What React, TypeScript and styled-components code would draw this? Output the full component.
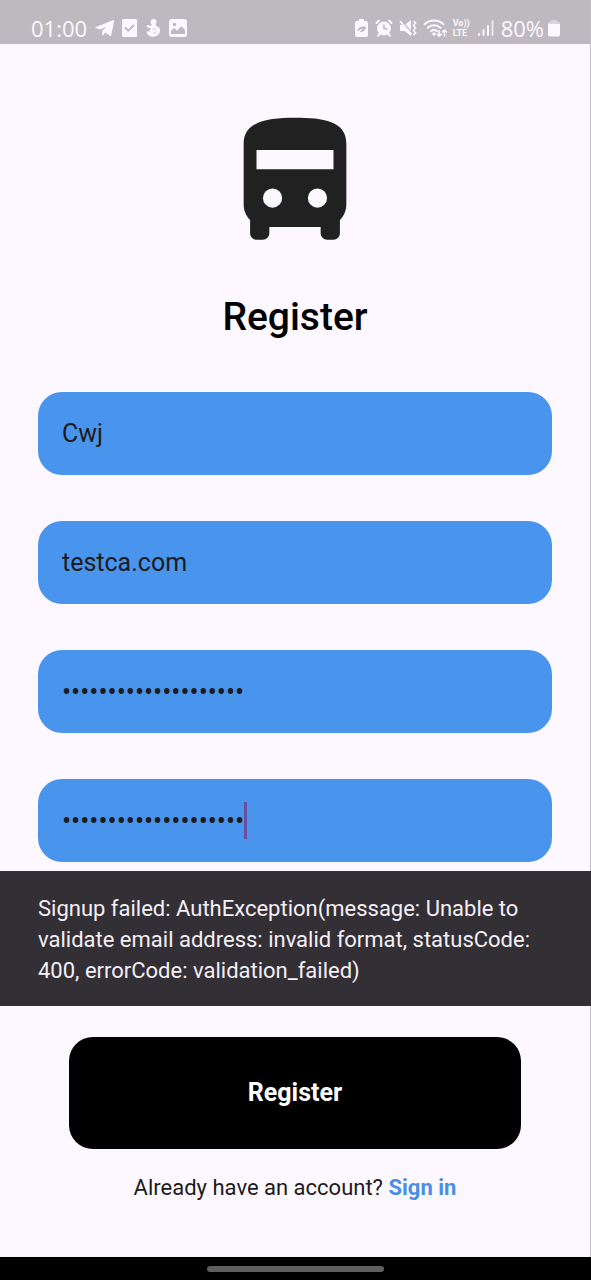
import React, { useState } from "react";
import styled, { createGlobalStyle } from "styled-components";

const GlobalStyle = createGlobalStyle`
  *, *::before, *::after { box-sizing: border-box; }
  body {
    margin: 0;
    background: #fdf8ff;
    color: #1d1b20;
    font-family: Roboto, "Liberation Sans", sans-serif;
  }
`;

const Screen = styled.div`
  display: flex;
  flex-direction: column;
  min-height: 100vh;
  border-right: 1px solid #c4bfc6;
  background: #fdf8ff;
`;

const StatusBar = styled.header`
  display: flex;
  align-items: center;
  justify-content: space-between;
  height: 44px;
  padding: 12px 30px 0 31px;
  background: #beb9bf;
  color: #fdf8ff;
  font: 22px/32px "Open Sans", Roboto, sans-serif;
`;

const StatusGroup = styled.div<{ $gap: number }>`
  display: flex;
  align-items: center;
  gap: ${(p) => p.$gap}px;
`;

const StatusIcon = styled.svg`
  display: block;
  height: 18px;
  flex: none;
  fill: currentColor;
  overflow: visible;
`;

const BatteryLevel = styled.span`
  display: flex;
  align-items: center;
  gap: 4px;
`;

const Volte = styled.span`
  display: flex;
  flex-direction: column;
  gap: 1px;
  width: 18px;
  font: 700 9px/9px Roboto, "Liberation Sans", sans-serif;
`;

const Form = styled.form`
  display: flex;
  flex-direction: column;
  flex: 1;
`;

const BusLogo = styled.svg`
  display: block;
  align-self: center;
  width: 154px;
  height: 154px;
  margin-top: 61px;
  fill: #212121;
`;

const Title = styled.h1`
  margin: 34px 0 51px;
  color: #000;
  font-size: 39px;
  font-weight: 500;
  line-height: 48px;
  text-align: center;
`;

const Fields = styled.div`
  display: flex;
  flex-direction: column;
  gap: 46px;
  padding: 0 38px;
`;

const Field = styled.label`
  display: flex;
  align-items: center;
  height: 83px;
  padding: 0 24px;
  border-radius: 24px;
  background: #4994ec;
  cursor: text;
`;

const FieldInput = styled.input<{ $hugsText?: boolean }>`
  ${(p) => (p.$hugsText ? "field-sizing: content;" : "flex: 1;")}
  min-width: 0;
  height: 36px;
  padding: 0;
  border: 0;
  outline: 0;
  background: transparent;
  color: #1d1b20;
  caret-color: transparent;
  font: ${(p) => (p.type === "password" ? 27 : 25)}px/36px Roboto, "Liberation Sans", sans-serif;
`;

const Caret = styled.span`
  width: 3px;
  height: 37px;
  background: #6750a4;
`;

const Snackbar = styled.div`
  margin: 9px -1px 0 0;
  padding: 22px 38px 20px;
  background: #322f35;
  color: #f5eff7;
  font-size: 22px;
  line-height: 31px;
`;

const SubmitButton = styled.button`
  height: 112px;
  margin: 31px 69px 0;
  border: 0;
  border-radius: 24px;
  background: #000;
  color: #fff;
  font: 700 25px/36px Roboto, "Liberation Sans", sans-serif;
  cursor: pointer;
`;

const SignInPrompt = styled.p`
  margin: 23px 0 0;
  font-size: 22px;
  line-height: 31px;
  text-align: center;
`;

const SignInLink = styled.a`
  color: #4a90e2;
  font-weight: 700;
  text-decoration: none;
`;

const NavigationBar = styled.footer`
  display: flex;
  align-items: center;
  justify-content: center;
  height: 23px;
  margin-right: -1px;
  background: #000;
`;

const HomeHandle = styled.span`
  width: 30%;
  height: 6px;
  border-radius: 3px;
  background: #5f5f5f;
`;

function StatusIcons() {
  return (
    <StatusBar>
      <StatusGroup $gap={8}>
        <span>01:00</span>
        <StatusIcon width="19" viewBox="0 0 19 18" aria-hidden="true">
          <path d="M.6 8.3 17.8 1.2c.8-.3 1.4.2 1.2 1.2L16.3 16c-.2 1-.9 1.2-1.7.8l-4.3-3.2-2.2 2.7c-.4.5-.9.3-.9-.3V12l4-4.200L5.2 10.400.700 9.100C-.1 8.900-.1 8.500.6 8.300Z" />
        </StatusIcon>
        <StatusIcon width="15" viewBox="0 0 15 18" aria-hidden="true">
          <rect width="15" height="18" rx="1.500" />
          <path d="m3 8.500 3.200 3.200L12 6" fill="none" stroke="#beb9bf" strokeWidth="1.800" />
        </StatusIcon>
        <StatusIcon width="16" viewBox="0 0 16 18" aria-hidden="true">
          <path d="M8.500 0c1.900 0 3.100 1.300 3 3 0 1-.4 1.700-1.100 2.200 1.200.9 1.700 2 1.600 3.300l1.800-1.100c.5 1.300 1.300 2.600 1.200 4.400-.2 3.500-3 5.900-6.900 5.900-3.500 0-6-1.700-6.400-4.200-.1-.8.3-1.300 1-1.300.9 0 1.400.7 2 1.100-.7-1.600.1-2.800 1.500-3.600L2.300 8.200c-.6-.3-.8-1-.5-1.500.4-.6 1-.6 1.600-.5l2.700.6.7-1.500C5.900 4.700 5.500 3.900 5.600 2.900 5.700 1.200 6.900 0 8.500 0Z" />
          <path d="m7.500 10.800 3-1.300M8.500 14.200c1.500.1 2.500-.6 2.900-1.800" fill="none" stroke="#beb9bf" strokeWidth=".8" />
        </StatusIcon>
        <StatusIcon width="18" viewBox="0 0 18 18" aria-hidden="true">
          <rect width="18" height="18" rx="3" />
          <circle cx="5.500" cy="5.500" r="1.700" fill="#beb9bf" />
          <path d="M2 15v-3.300L5.200 9l3 2.700L12.300 7 16 11v4Z" fill="#beb9bf" />
        </StatusIcon>
      </StatusGroup>

      <StatusGroup $gap={7}>
        <StatusIcon width="13" viewBox="0 0 13 18" aria-hidden="true">
          <path d="M4 0h5v2h2a2 2 0 0 1 2 2v12a2 2 0 0 1-2 2H2a2 2 0 0 1-2-2V4a2 2 0 0 1 2-2h2Z" />
          <path d="M2.500 12.500c-.4-3 1.500-5 8.500-5-.3 4.200-3 6.200-6.200 5.200L8 10c-2.200.3-4 1-5.500 2.500Z" fill="#beb9bf" />
        </StatusIcon>
        <StatusIcon width="18" viewBox="0 0 18 18" aria-hidden="true">
          <path d="m1.500 4 2.500-2.500M16.500 4 14 1.500M4.500 15l-1.500 1.800M13.500 15l1.500 1.800" fill="none" stroke="currentColor" strokeWidth="2" strokeLinecap="round" />
          <circle cx="9" cy="9.500" r="6.900" />
          <path d="M9 5.500v4.300h3.500" fill="none" stroke="#beb9bf" strokeWidth="1.500" />
        </StatusIcon>
        <StatusIcon width="17" viewBox="0 0 17 18" aria-hidden="true">
          <path d="M0 6h4.500L11 1v16L4.500 12H0Z" />
          <path d="m1 1 11 13" stroke="#beb9bf" strokeWidth="1.200" />
          <path d="m0 2 11.500 13.500" stroke="currentColor" strokeWidth="1.600" />
          <path d="m13.500 2 2 2-2 2.500 2 2.500-2 2.500 2 2.500-2 2" fill="none" stroke="currentColor" strokeWidth="1.700" />
        </StatusIcon>
        <StatusIcon width="22" viewBox="0 0 22 18" aria-hidden="true">
          <g fill="none" stroke="currentColor" strokeWidth="2" strokeLinecap="round">
            <path d="M.5 5.200c5.300-5 13.700-5 19 0M3.700 8.800c3.700-3.300 9-3.300 12.700 0M7 12.200c1.700-1.500 4.300-1.500 6 0" />
          </g>
          <circle cx="10" cy="15" r="1.700" />
          <g fill="none" stroke="currentColor" strokeWidth="1.500">
            <path d="M15.200 11v6m-2.400-2.300 2.400 2.400 2.400-2.400M20.500 17.500v-6.500m-2.400 2.400 2.400-2.400 2.400 2.400" />
          </g>
        </StatusIcon>
        <Volte>
          <span>Vo))</span>
          <span>LTE</span>
        </Volte>
        <StatusIcon width="16" viewBox="0 0 16 18" aria-hidden="true">
          <rect y="14" width="2" height="3" rx="1" />
          <rect x="4.500" y="10" width="2" height="7" rx="1" />
          <rect x="9" y="6" width="2" height="11" rx="1" />
          <rect x="13.500" y="1" width="2" height="16" rx="1" opacity=".75" />
        </StatusIcon>
        <BatteryLevel>
          80%
          <StatusIcon width="12" viewBox="0 0 12 18" aria-hidden="true">
            <path d="M3.500 1h5v1.500H10a2 2 0 0 1 2 2V6H0V4.500a2 2 0 0 1 2-2h1.500Z" opacity=".45" />
            <path d="M0 5h12v10.500a2 2 0 0 1-2 2H2a2 2 0 0 1-2-2Z" />
          </StatusIcon>
        </BatteryLevel>
      </StatusGroup>
    </StatusBar>
  );
}

export default function App() {
  const [name, setName] = useState("Cwj");
  const [email, setEmail] = useState("testca.com");
  const [password, setPassword] = useState("correcthorsebattery1");
  const [confirmation, setConfirmation] = useState("correcthorsebattery1");

  return (
    <Screen>
      <GlobalStyle />
      <StatusIcons />
      <Form noValidate onSubmit={(e) => e.preventDefault()}>
        <BusLogo viewBox="0 0 24 24" aria-hidden="true">
          <path
            fillRule="evenodd"
            d="M12 2C8 2 4 2.500 4 6v9.500c0 .95.38 1.810 1 2.440V20c0 .55.45 1 1 1h1c.55 0 1-.45 1-1v-1h8v1c0 .55.45 1 1 1h1c.55 0 1-.45 1-1v-2.060c.62-.63 1-1.490 1-2.440V6c0-3.500-3.580-4-8-4ZM8.500 16a1.500 1.500 0 1 1 0-3 1.500 1.500 0 0 1 0 3Zm7 0a1.500 1.500 0 1 1 0-3 1.500 1.500 0 0 1 0 3ZM18 10H6V7h12v3Z"
          />
        </BusLogo>
        <Title>Register</Title>
        <Fields>
          <Field>
            <FieldInput aria-label="Name" value={name} onChange={(e) => setName(e.target.value)} />
          </Field>
          <Field>
            <FieldInput type="email" aria-label="Email" value={email} onChange={(e) => setEmail(e.target.value)} />
          </Field>
          <Field>
            <FieldInput
              type="password"
              aria-label="Password"
              value={password}
              onChange={(e) => setPassword(e.target.value)}
            />
          </Field>
          <Field>
            <FieldInput
              $hugsText
              type="password"
              aria-label="Confirm password"
              value={confirmation}
              onChange={(e) => setConfirmation(e.target.value)}
            />
            <Caret />
          </Field>
        </Fields>
        <Snackbar role="alert">
          Signup failed: AuthException(message: Unable to validate email address: invalid format, statusCode: 400,
          errorCode: validation_failed)
        </Snackbar>
        <SubmitButton type="submit">Register</SubmitButton>
        <SignInPrompt>
          Already have an account? <SignInLink href="#sign-in">Sign in</SignInLink>
        </SignInPrompt>
      </Form>
      <NavigationBar>
        <HomeHandle />
      </NavigationBar>
    </Screen>
  );
}
